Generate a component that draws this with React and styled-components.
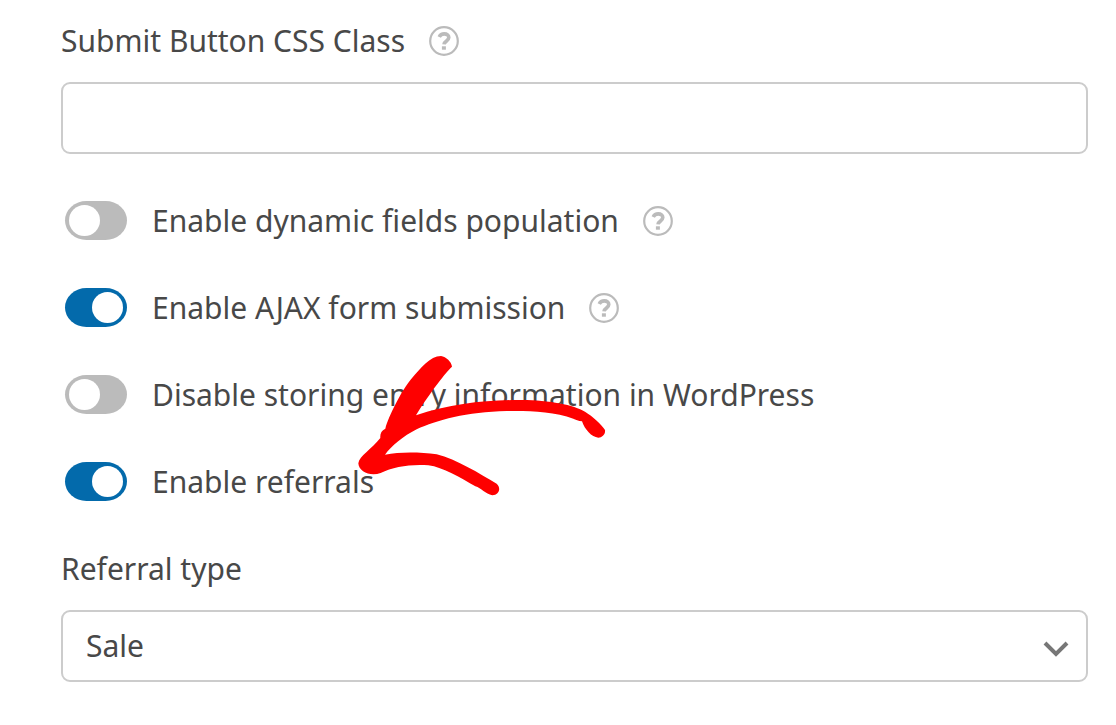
import { useState } from "react";
import styled, { createGlobalStyle } from "styled-components";

const toggles = [
  { id: "dynamic", label: "Enable dynamic fields population", on: false, help: true },
  { id: "ajax", label: "Enable AJAX form submission", on: true, help: true },
  { id: "storing", label: "Disable storing entry information in WordPress", on: false },
  { id: "referrals", label: "Enable referrals", on: true },
];

function Help({ label }) {
  return (
    <HelpButton type="button" aria-label={`Help: ${label}`}>
      <HelpIcon viewBox="0 0 30 30" aria-hidden="true">
        <circle cx="15" cy="15" r="13.8" strokeWidth="2.2" />
        <path d="M10.2 11C11.2 8.9 13 7.9 15.2 7.9C18 7.9 19.8 9.4 19.8 11.6C19.8 15 15.4 14.8 15 18.4" strokeWidth="3.6" />
        <path d="M12.9 22H16.9" strokeWidth="3.4" />
      </HelpIcon>
    </HelpButton>
  );
}

function App() {
  const [values, setValues] = useState(
    Object.fromEntries(toggles.map(({ id, on }) => [id, on]))
  );

  return (
    <>
      <GlobalStyle />
      <Settings>
        <Field>
          <LabelRow>
            <Label htmlFor="css-class">Submit Button CSS Class</Label>
            <Help label="Submit Button CSS Class" />
          </LabelRow>
          <TextInput id="css-class" type="text" />
        </Field>

        <Toggles>
          {toggles.map(({ id, label, help }) => (
            <ToggleRow key={id}>
              <Switch
                id={id}
                type="checkbox"
                checked={values[id]}
                onChange={(e) => setValues({ ...values, [id]: e.target.checked })}
              />
              <LabelRow>
                <Label htmlFor={id}>{label}</Label>
                {help && <Help label={label} />}
              </LabelRow>
            </ToggleRow>
          ))}
          <Arrow viewBox="0 0 870 510" aria-hidden="true">
            <path d="M303 48C318 50 335 66 336 80C312 102 258 176 228 226C330 192 430 181 530 180C620 178 700 194 735 215C758 229 786 254 795 270C797 283 786 293 775 293C755 292 734 268 726 244C716 244 706 238 700 236C640 213 560 212 500 213C380 216 290 240 230 268C190 288 154 318 135 344C180 335 240 336 290 343C350 358 420 402 470 431C484 444 478 464 457 466C436 462 424 444 406 439C360 413 310 382 265 376C210 372 160 381 122 399C92 410 56 396 55 370C58 348 94 328 121 294C120 280 124 272 136 266C146 228 186 150 213 118C242 84 270 48 303 48Z" />
          </Arrow>
        </Toggles>

        <Field>
          <LabelRow>
            <Label htmlFor="referral-type">Referral type</Label>
          </LabelRow>
          <SelectWrap>
            <Select id="referral-type" defaultValue="sale">
              <option value="sale">Sale</option>
            </Select>
            <Chevron viewBox="0 0 26 16" aria-hidden="true">
              <path d="M2 2L13 13L24 2" />
            </Chevron>
          </SelectWrap>
        </Field>
      </Settings>
    </>
  );
}

const GlobalStyle = createGlobalStyle`
  * {
    box-sizing: border-box;
  }
  body {
    margin: 0;
    background: #fff;
    color: #484848;
    font-family: "Noto Sans", "Open Sans", sans-serif;
    font-size: 30px;
    line-height: 40px;
  }
  input, select, button {
    font: inherit;
    color: inherit;
  }
`;

const Settings = styled.form`
  padding: 21px 28px 42px 61px;
`;

const Field = styled.div`
  display: flex;
  flex-direction: column;
  gap: 21px;
`;

const LabelRow = styled.div`
  display: flex;
  align-items: center;
  gap: 24px;
`;

const Label = styled.label`
  white-space: nowrap;
`;

const HelpButton = styled.button`
  display: flex;
  padding: 0;
  border: 0;
  background: none;
  color: #bbb;
  cursor: pointer;
`;

const HelpIcon = styled.svg`
  width: 30px;
  height: 30px;
  fill: none;
  stroke: currentColor;
`;

const TextInput = styled.input`
  width: 100%;
  height: 72px;
  padding: 0 24px;
  border: 2px solid #ccc;
  border-radius: 9px;
  background: #fff;
`;

const Toggles = styled.div`
  position: relative;
  display: flex;
  flex-direction: column;
  gap: 47px;
  padding: 47px 4px;
`;

const ToggleRow = styled.div`
  display: flex;
  align-items: flex-start;
  gap: 25px;
`;

const Switch = styled.input`
  appearance: none;
  display: flex;
  align-items: center;
  justify-content: ${({ checked }) => (checked ? "flex-end" : "flex-start")};
  flex: none;
  width: 62px;
  height: 39px;
  margin: 0;
  padding: 0 4px;
  border-radius: 22px / 20px;
  background: ${({ checked }) => (checked ? "#036aab" : "#bbb")};
  cursor: pointer;
  &::before {
    content: "";
    width: 31px;
    height: 31px;
    border-radius: 50%;
    background: #fff;
  }
`;

// Hand-drawn arrow lying over the toggles
const Arrow = styled.svg`
  position: absolute;
  left: 279px;
  top: 186px;
  width: 290px;
  height: 170px;
  fill: #fe0000;
  pointer-events: none;
`;

const SelectWrap = styled.div`
  position: relative;
`;

const Select = styled.select`
  appearance: none;
  display: block;
  width: 100%;
  height: 72px;
  padding: 0 60px 0 23px;
  border: 2px solid #ccc;
  border-radius: 9px;
  background: #fff;
`;

const Chevron = styled.svg`
  position: absolute;
  right: 19px;
  top: 31px;
  width: 26px;
  height: 16px;
  fill: none;
  stroke: #777;
  stroke-width: 4;
  pointer-events: none;
`;

export default App;
